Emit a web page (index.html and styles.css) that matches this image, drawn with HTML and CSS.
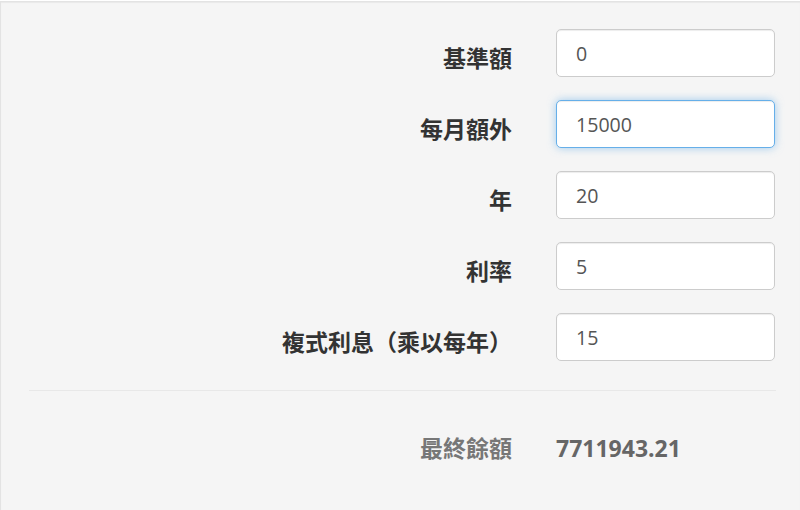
FILE: index.html
```html
<!DOCTYPE html>
<html lang="zh-Hant">
<head>
    <meta charset="UTF-8">
    <meta name="viewport" content="width=device-width, initial-scale=1.0">
    <title>複利計算</title>
    <link rel="stylesheet" href="styles.css">
</head>
<body>
    <div class="well">
        <form class="calc-form">
            <div class="form-row">
                <label for="base">基準額</label>
                <input type="text" id="base" class="field" value="0">
            </div>
            <div class="form-row">
                <label for="monthly">每月額外</label>
                <input type="text" id="monthly" class="field focused" value="15000">
            </div>
            <div class="form-row">
                <label for="years">年</label>
                <input type="text" id="years" class="field" value="20">
            </div>
            <div class="form-row">
                <label for="rate">利率</label>
                <input type="text" id="rate" class="field" value="5">
            </div>
            <div class="form-row">
                <label for="compound">複式利息（乘以每年）</label>
                <input type="text" id="compound" class="field" value="15">
            </div>
        </form>
        <hr>
        <div class="result-row">
            <span class="result-label">最終餘額</span>
            <span class="result-value">7711943.21</span>
        </div>
    </div>
</body>
</html>
```

FILE: styles.css
```css
body {
    margin: 0;
    background-color: #fff;
    font-family: "Open Sans", "Noto Sans CJK TC", sans-serif;
    color: #333;
    overflow: hidden;
}

.well {
    background-color: #f5f5f5;
    border-top: 1px solid #e3e3e3;
    border-left: 1px solid #e3e3e3;
    box-shadow: inset 0 1px 1px rgba(0, 0, 0, 0.05);
    margin: 1px 0 0 0;
    padding: 27px 0 0 28px;
    height: 510px;
    box-sizing: border-box;
}

.calc-form {
    display: flex;
    flex-direction: column;
    gap: 23px;
}

.form-row,
.result-row {
    display: grid;
    grid-template-columns: 483px 219px;
    column-gap: 44px;
    align-items: center;
}

.form-row label,
.result-label {
    text-align: right;
    font-size: 23px;
    font-weight: bold;
    line-height: 32px;
}

.form-row label {
    padding-top: 10px;
}

.field {
    height: 48px;
    box-sizing: border-box;
    padding: 0 19px;
    font-family: "Open Sans", sans-serif;
    font-size: 19.6px;
    color: #555;
    background-color: #fff;
    border: 1px solid #ccc;
    border-radius: 5px;
    box-shadow: inset 0 1px 1px rgba(0, 0, 0, 0.075);
    outline: none;
}

.field.focused {
    border-color: #66afe9;
    box-shadow: inset 0 1px 1px rgba(0, 0, 0, 0.075), 0 0 8px rgba(102, 175, 233, 0.6);
}

hr {
    width: 747px;
    margin: 29px 0 0 0;
    border: 0;
    border-top: 1px solid #e8e8e8;
}

.result-row {
    margin-top: 41px;
}

.result-label {
    color: #777;
}

.result-value {
    font-size: 23px;
    font-weight: bold;
    line-height: 32px;
    color: #666;
}
```
